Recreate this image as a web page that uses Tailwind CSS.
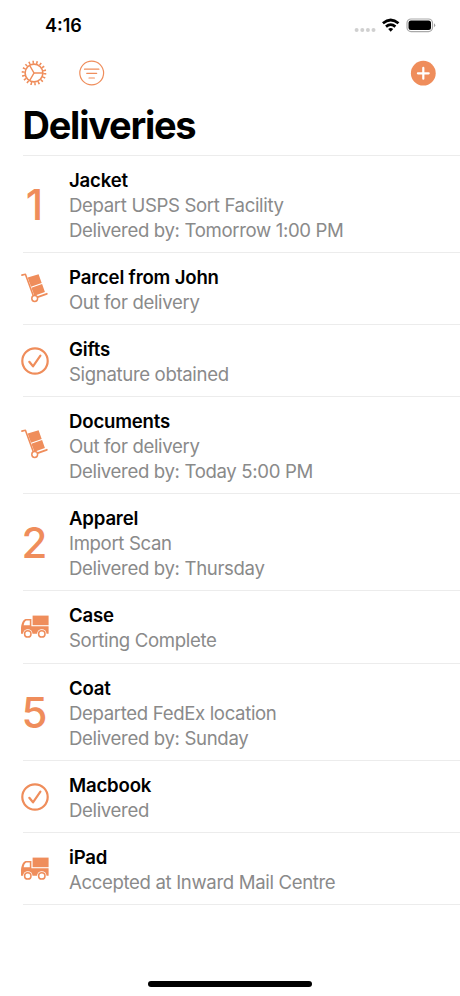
<!DOCTYPE html>
<html lang="en">
<head>
<meta charset="utf-8">
<meta name="viewport" content="width=device-width, initial-scale=1">
<title>Deliveries</title>
<script src="https://cdn.jsdelivr.net/npm/@tailwindcss/browser@4"></script>
</head>
<body class="bg-white">
<svg class="hidden">
  <symbol id="dolly" viewBox="0 0 28 30">
    <path d="M.9 2.100 4.400 1.300 12.400 23" fill="none" stroke="currentColor" stroke-width="1.600" stroke-linecap="round" stroke-linejoin="round"/>
    <path d="M6.700 4.500 17.600 1.200 20.700 10 10 13.700ZM10.400 14.700 21.100 11 23.900 19 13.400 22.700Z" fill="currentColor"/>
    <path d="M16.600 24.200 25.800 20.800" stroke="currentColor" stroke-width="1.800" stroke-linecap="round"/>
    <circle cx="13.700" cy="25.500" r="2.900" fill="white" stroke="currentColor" stroke-width="1.500"/>
  </symbol>
  <symbol id="check" viewBox="0 0 28 28">
    <circle cx="14" cy="14" r="12.700" fill="none" stroke="currentColor" stroke-width="2.200"/>
    <path d="M8.300 14.800 12 19.300 19.400 8.700" fill="none" stroke="currentColor" stroke-width="2.200" stroke-linecap="round" stroke-linejoin="round"/>
  </symbol>
  <symbol id="truck" viewBox="0 0 28 24">
    <path d="M11.600 .600H27.600V10.200H11.600Z" fill="currentColor"/>
    <path fill-rule="evenodd" d="M4.600 4H10.400V11.200H27.600V18.700H0V13.200C.2 9.500 1.600 5 4.600 4ZM5.300 5.500C3.900 6 3 8.200 2.700 10.200H8.800V5.500Z" fill="currentColor"/>
    <circle cx="6.800" cy="18.900" r="4.700" fill="white"/><circle cx="20.800" cy="18.900" r="4.700" fill="white"/>
    <circle cx="6.800" cy="18.900" r="3.200" fill="none" stroke="currentColor" stroke-width="1.500"/>
    <circle cx="20.800" cy="18.900" r="3.200" fill="none" stroke="currentColor" stroke-width="1.500"/>
  </symbol>
</svg>
<div class="flex h-[996px] w-[460px] flex-col overflow-hidden bg-white font-['Inter','Liberation_Sans',sans-serif] text-black">
  <div class="flex h-[50px] shrink-0 items-center pl-[45px] pr-[24px]">
    <span class="pt-[2px] text-[18px] font-semibold leading-6">4:16</span>
    <svg class="ml-auto h-[20px] w-[82px]" viewBox="0 0 82 20">
      <g fill="#d0d0d0"><circle cx="2.600" cy="15" r="2"/><circle cx="8.300" cy="15" r="2"/><circle cx="13.900" cy="15" r="2"/><circle cx="19.500" cy="15" r="2"/></g>
      <g fill="none" stroke="#000" stroke-width="2.700"><path d="M28.900 8.300Q36.700 1.700 44.500 8.300"/><path d="M32 11.600Q36.700 7.600 41.400 11.600"/></g>
      <path d="M34.200 14Q36.700 12 39.200 14L36.700 16.700Z"/>
      <rect x="53" y="4" width="25.500" height="12.600" rx="4" fill="none" stroke="#a9a9a9" stroke-width="1.200"/>
      <rect x="54.500" y="5.500" width="22.500" height="9.600" rx="2.500"/>
      <path d="M80 8.300Q82.500 10.200 80 12.200Z" fill="#a0a0a0"/>
    </svg>
  </div>
  <div class="flex h-[46px] shrink-0 items-center pl-[21px] pr-[24px] text-[#ef8d5b]">
    <svg class="h-[26px] w-[26px]" viewBox="-13 -13 26 26" fill="none" stroke="currentColor">
      <circle r="8.900" stroke-width="1.600"/>
      <circle r="10.800" stroke-width="3" stroke-dasharray="1.500 2.270"/>
      <path d="M0 0H8.500M0 0-4.300-7.500M0 0-4.300 7.500" stroke-width="1.500"/>
    </svg>
    <svg class="ml-[32px] h-[26px] w-[26px]" viewBox="0 0 26 26" fill="none" stroke="currentColor" stroke-width="1.200" stroke-linecap="round">
      <circle cx="12.700" cy="13" r="11.900"/><path d="M5.500 9.200H19.900M7.700 13.300H17.700M10 18H15.400"/>
    </svg>
    <svg class="ml-auto h-[26px] w-[26px]" viewBox="0 0 26 26"><circle cx="13.300" cy="13.200" r="12.400" fill="currentColor"/><path d="M13.300 7.900V18.700M7.900 13.300H18.700" stroke="white" stroke-width="2.200" stroke-linecap="round"/></svg>
  </div>
  <h1 class="h-[59px] shrink-0 pl-[22.500px] text-[38px] font-bold leading-[58px] tracking-[-1.250px]">Deliveries</h1>
  <ul id="deliveries" class="ml-[23px] border-t border-[#ececec]"></ul>
  <div class="mt-auto mb-[9px] ml-[148px] h-[6px] w-[164px] shrink-0 rounded-full bg-black"></div>
</div>
<script>
const deliveries = [
  ['1', 97, 'Jacket', 'Depart USPS Sort Facility', 'Delivered by: Tomorrow 1:00 PM'],
  ['dolly', 72, 'Parcel from John', 'Out for delivery'],
  ['check', 72, 'Gifts', 'Signature obtained'],
  ['dolly', 97, 'Documents', 'Out for delivery', 'Delivered by: Today 5:00 PM'],
  ['2', 97, 'Apparel', 'Import Scan', 'Delivered by: Thursday'],
  ['truck', 73, 'Case', 'Sorting Complete'],
  ['5', 97, 'Coat', 'Departed FedEx location', 'Delivered by: Sunday'],
  ['check', 72, 'Macbook', 'Delivered'],
  ['truck', 72, 'iPad', 'Accepted at Inward Mail Centre']
];
const iconClass = {
  dolly: 'h-[30px] w-[28px] mb-[2px]',
  check: 'h-[28px] w-[28px]',
  truck: 'h-[24px] w-[28px]'
};
document.getElementById('deliveries').innerHTML = deliveries.map(([mark, height, title, ...lines]) => `
  <li class="flex border-b border-[#ececec]" style="height:${height}px">
    <div class="-ml-[2.500px] flex w-[48.500px] items-center text-[#ef8d5b]">
      ${iconClass[mark] ? `<svg class="${iconClass[mark]}"><use href="#${mark}"/></svg>`
        : `<span class="w-[28px] pt-[2px] text-center text-[42px] font-[450] leading-none">${mark}</span>`}
    </div>
    <div class="whitespace-nowrap pt-[12px] text-[18.600px] leading-[24.800px] text-[#8a8a8a] tracking-[-0.350px]">
      <div class="font-semibold text-black tracking-[-0.180px]">${title}</div>
      ${lines.map(line => `<div>${line}</div>`).join('')}
    </div>
  </li>`).join('');
</script>
</body>
</html>
